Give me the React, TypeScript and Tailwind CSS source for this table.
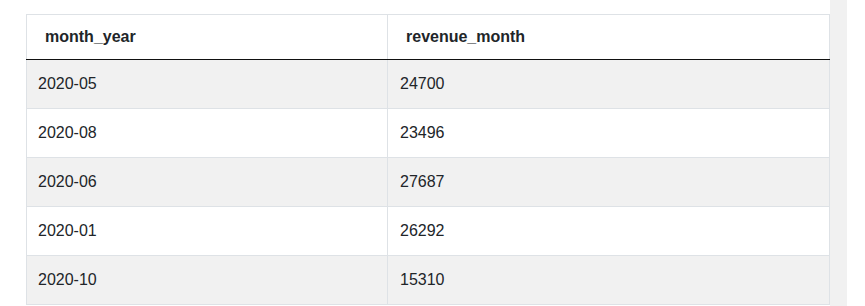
const rows: [string, string][] = [
  ["2020-05", "24700"],
  ["2020-08", "23496"],
  ["2020-06", "27687"],
  ["2020-01", "26292"],
  ["2020-10", "15310"],
];

export default function App() {
  return (
    <div
      className="flex h-[306px] w-[865px] overflow-hidden bg-white text-[#212529]"
      style={{ fontFamily: '"Liberation Sans", Arial, sans-serif' }}
    >
      <div className="w-[830px] pl-[26px] pt-[14px]">
        <table className="w-[804px] border-collapse text-[16px] leading-[20px]">
          <thead>
            <tr className="h-[45px]">
              <th className="w-[361px] border border-b-[#111] border-[#dee2e6] pl-[18px] text-left align-middle font-bold">
                month_year
              </th>
              <th className="border border-b-[#111] border-[#dee2e6] pl-[18px] text-left align-middle font-bold">
                revenue_month
              </th>
            </tr>
          </thead>
          <tbody>
            {rows.map(([m, r], i) => (
              <tr
                key={m}
                className={i % 2 === 0 ? "h-[49px] bg-[#f1f1f1]" : "h-[49px] bg-white"}
              >
                <td className="border border-[#dee2e6] pl-[11px] align-middle">{m}</td>
                <td className="border border-[#dee2e6] pl-[12px] align-middle">{r}</td>
              </tr>
            ))}
          </tbody>
        </table>
      </div>
      <div className="h-full w-[17px] bg-[#f1f1f1]" />
    </div>
  );
}
